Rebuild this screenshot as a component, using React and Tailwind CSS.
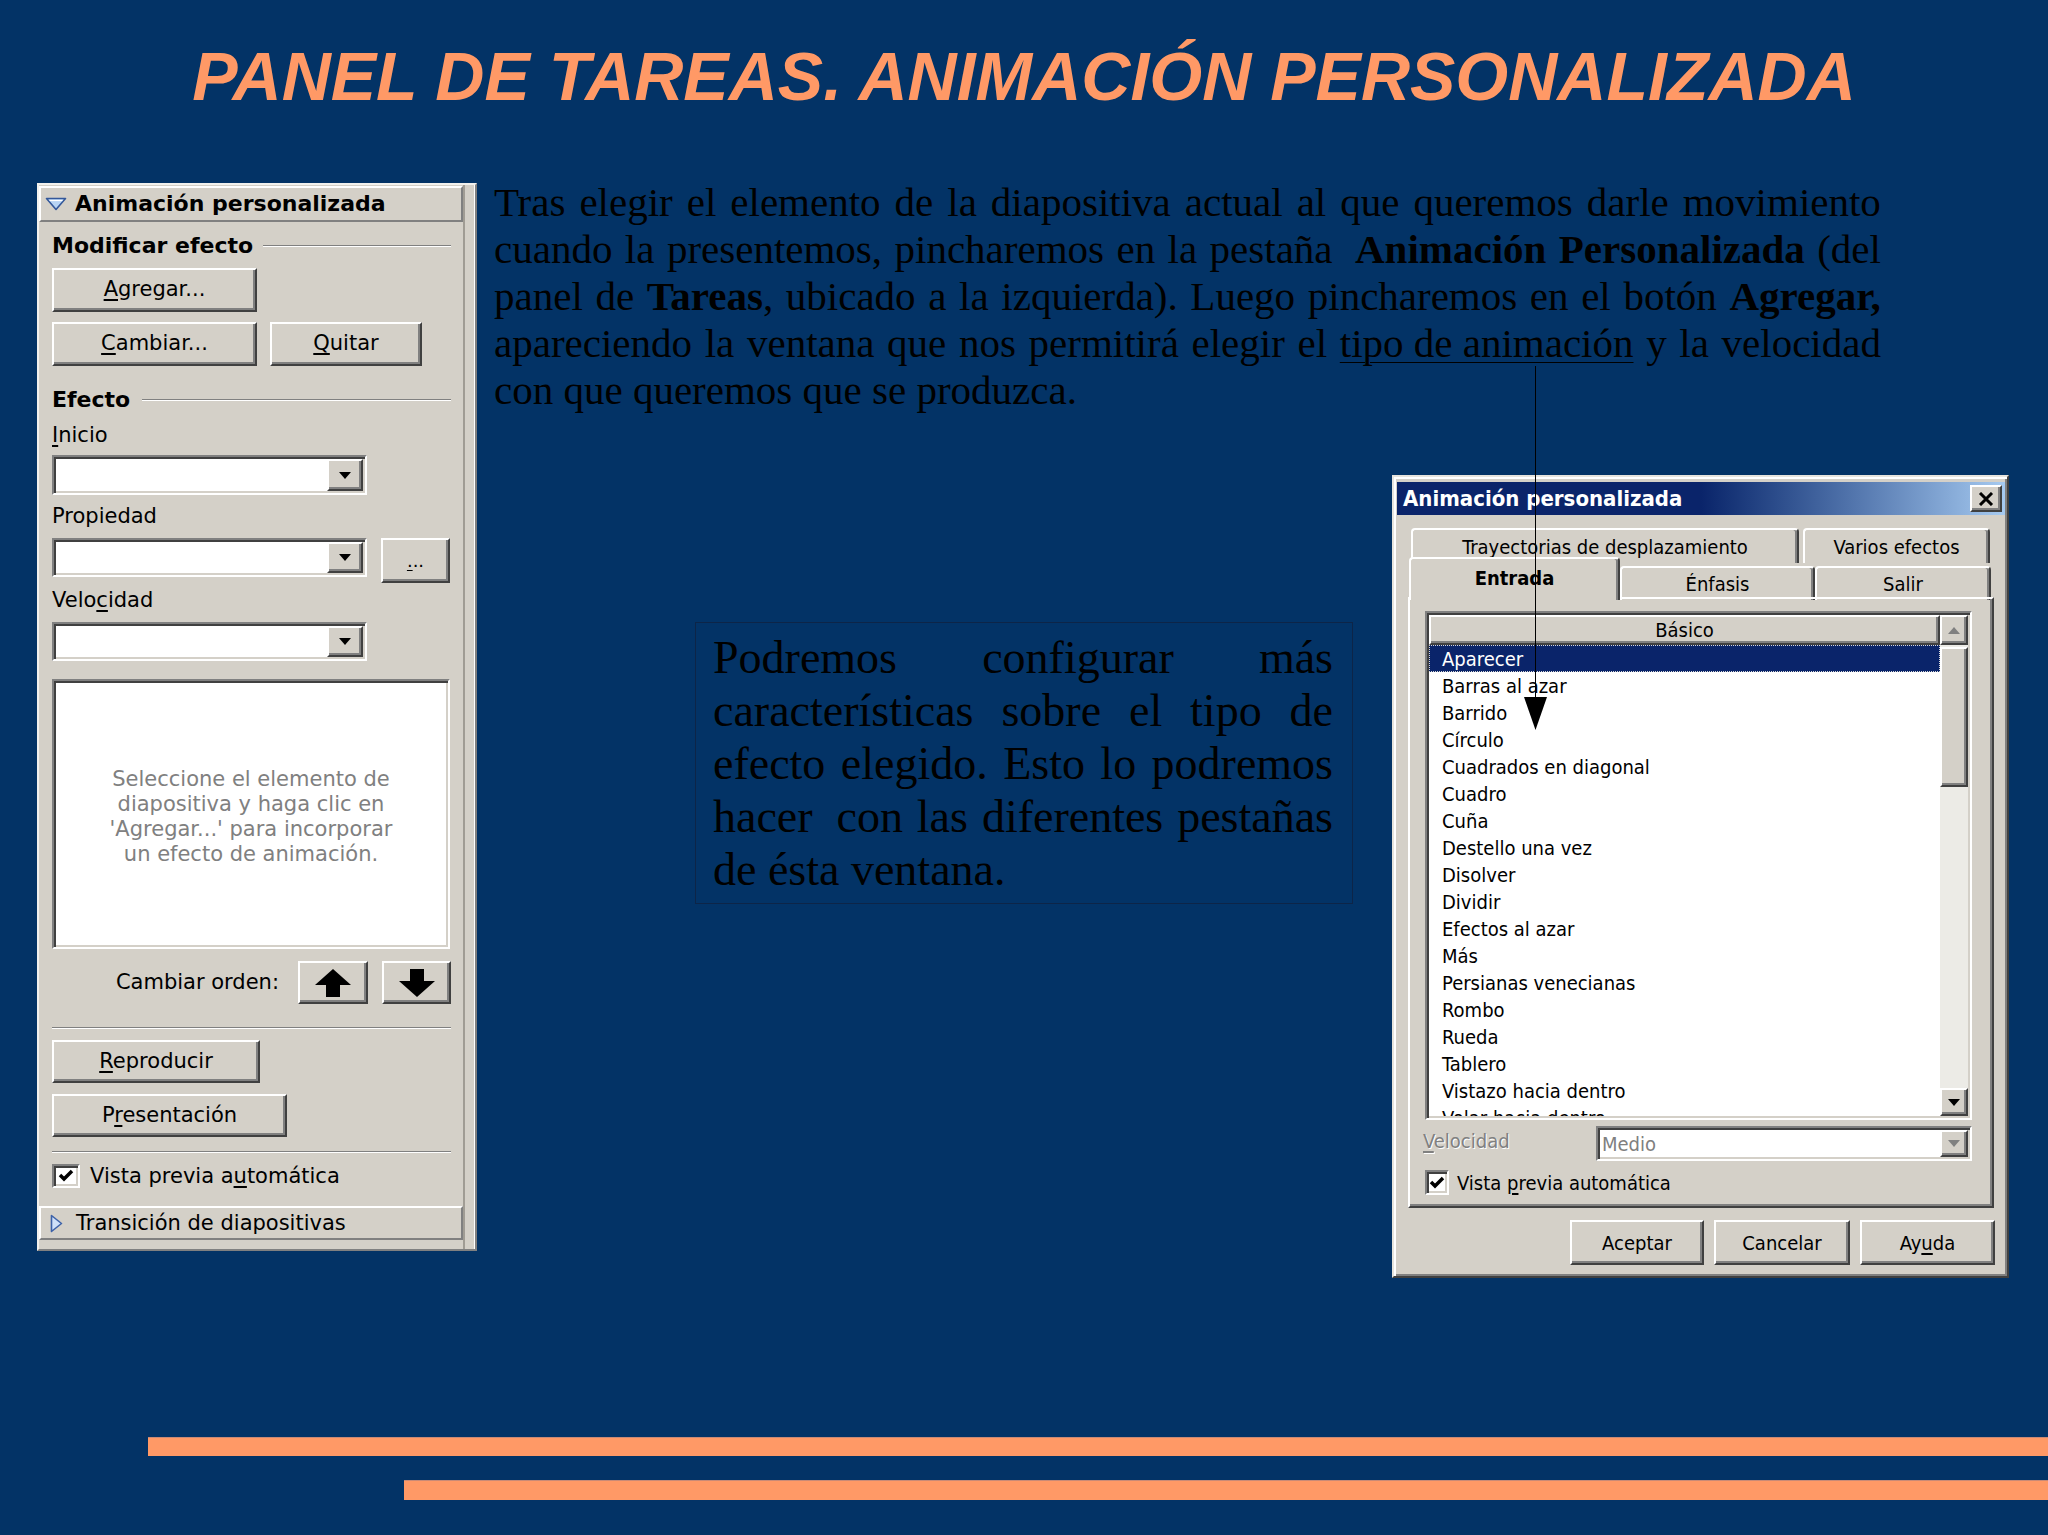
import React from "react";

const RAISED =
  "bg-[#d4d0c8] border-2 border-t-white border-l-white border-r-[#404040] border-b-[#404040] shadow-[inset_-2px_-2px_0_#808080]";
const SUNKEN =
  "bg-white border-2 border-t-[#808080] border-l-[#808080] border-r-white border-b-white shadow-[inset_2px_2px_0_#404040,inset_-2px_-2px_0_#d4d0c8]";

function Btn({ className = "", children }) {
  return (
    <div className={`${RAISED} flex items-center justify-center ${className}`}>
      {children}
    </div>
  );
}

function DropArrow({ color = "black" }) {
  return (
    <svg width="12" height="7" viewBox="0 0 12 7">
      <path d="M0 0 H12 L6 7 Z" fill={color} />
    </svg>
  );
}

function Combo({ className = "", children }) {
  return (
    <div className={`${SUNKEN} flex items-stretch p-[2px] ${className}`}>
      <div className="flex-1 flex items-center">{children}</div>
      <div className={`${RAISED} w-[36px] flex items-center justify-center`}>
        <DropArrow />
      </div>
    </div>
  );
}

function Check({ size = "w-[28px] h-[24px]" }) {
  return (
    <div className={`${SUNKEN} ${size} flex items-center justify-center`}>
      <svg width="16" height="14" viewBox="0 0 16 14">
        <path d="M2 6 L6 10 L14 2" stroke="black" strokeWidth="3.5" fill="none" />
      </svg>
    </div>
  );
}

function Etched({ className = "" }) {
  return <div className={`h-[2px] border-t border-t-[#808080] border-b border-b-white ${className}`} />;
}

function JLine({ words, className = "" }) {
  return (
    <div className={`flex justify-between ${className}`}>
      {words.map((w, i) => (
        <span key={i}>{w}</span>
      ))}
    </div>
  );
}

function Panel() {
  return (
    <div className="mt-[4px] ml-[37px] w-[440px] h-[1068px] bg-[#d4d0c8] border-2 border-t-[#f2f1ed] border-l-[#f2f1ed] border-r-[#808080] border-b-[#808080] flex font-['DejaVu_Sans',sans-serif] text-[21px] text-black">
      <div className="w-[424px] flex flex-col">
        <div className="mt-[1px] h-[36px] border-2 border-t-white border-l-white border-r-[#808080] border-b-[#808080] flex items-center">
          <svg className="ml-[4px]" width="22" height="14" viewBox="0 0 22 14">
            <path d="M1.5 1.5 L20.5 1.5 L11 12.5 Z" fill="#b8d4f4" stroke="#34589a" strokeWidth="1.6" strokeLinejoin="round" />
            <path d="M4.5 3.5 L17.5 3.5" stroke="#ffffff" strokeWidth="1.2" />
          </svg>
          <span className="ml-[8px] font-bold text-[22px] leading-[24px]">Animación personalizada</span>
        </div>

        <div className="pl-[13px] pr-[12px] flex flex-col">
          <div className="mt-[12px] h-[24px] flex items-center">
            <span className="font-bold text-[22px] leading-[24px] whitespace-nowrap">Modificar efecto</span>
            <Etched className="flex-1 ml-[10px]" />
          </div>
          <Btn className="mt-[10px] w-[205px] h-[44px]">
            <span>
              <u className="underline-offset-[3px]">A</u>gregar...
            </span>
          </Btn>
          <div className="mt-[10px] flex">
            <Btn className="w-[205px] h-[44px]">
              <span>
                <u className="underline-offset-[3px]">C</u>ambiar...
              </span>
            </Btn>
            <Btn className="ml-[13px] w-[152px] h-[44px]">
              <span>
                <u className="underline-offset-[3px]">Q</u>uitar
              </span>
            </Btn>
          </div>
          <div className="mt-[22px] h-[24px] flex items-center">
            <span className="font-bold text-[22px] leading-[24px]">Efecto</span>
            <Etched className="flex-1 ml-[12px]" />
          </div>
          <div className="mt-[11px] h-[24px] leading-[24px]">
            <u className="underline-offset-[3px]">I</u>nicio
          </div>
          <Combo className="mt-[8px] w-[315px] h-[40px]" />
          <div className="mt-[9px] h-[24px] leading-[24px]">Propiedad</div>
          <div className="mt-[10px] flex items-start">
            <Combo className="w-[315px] h-[39px]" />
            <Btn className="ml-[14px] w-[69px] h-[45px]">
              <span className="text-[18px]">
                <u className="underline-offset-[3px]">.</u>..
              </span>
            </Btn>
          </div>
          <div className="mt-[5px] h-[24px] leading-[24px]">
            Velo<u className="underline-offset-[3px]">c</u>idad
          </div>
          <Combo className="mt-[10px] w-[315px] h-[39px]" />
          <div className={`${SUNKEN} mt-[18px] w-[398px] h-[270px] flex items-center justify-center pt-[5px]`}>
            <div className="text-center text-[#808080] leading-[25px]">
              Seleccione el elemento de
              <br />
              diapositiva y haga clic en
              <br />
              'Agregar...' para incorporar
              <br />
              un efecto de animación.
            </div>
          </div>
          <div className="mt-[12px] h-[43px] flex items-center justify-end">
            <span className="mr-[19px]">Cambiar orden:</span>
            <Btn className="w-[70px] h-[43px]">
              <svg width="36" height="28" viewBox="0 0 36 28">
                <path d="M18 0 L36 16 L25 16 L25 28 L11 28 L11 16 L0 16 Z" fill="black" />
              </svg>
            </Btn>
            <Btn className="ml-[14px] w-[69px] h-[43px]">
              <svg width="36" height="28" viewBox="0 0 36 28">
                <path d="M18 28 L36 12 L25 12 L25 0 L11 0 L11 12 L0 12 Z" fill="black" />
              </svg>
            </Btn>
          </div>
          <Etched className="mt-[23px]" />
          <Btn className="mt-[11px] w-[208px] h-[43px]">
            <span>
              <u className="underline-offset-[3px]">R</u>eproducir
            </span>
          </Btn>
          <Btn className="mt-[11px] w-[235px] h-[43px]">
            <span>
              P<u className="underline-offset-[3px]">r</u>esentación
            </span>
          </Btn>
          <Etched className="mt-[14px]" />
          <div className="mt-[11px] h-[24px] flex items-center">
            <Check />
            <span className="ml-[10px] leading-[24px]">
              Vista previa a<u className="underline-offset-[3px]">u</u>tomática
            </span>
          </div>
        </div>

        <div className="mt-[18px] h-[34px] border-2 border-t-white border-l-white border-r-[#808080] border-b-[#808080] flex items-center">
          <svg className="ml-[9px]" width="13" height="19" viewBox="0 0 13 19">
            <path d="M1.5 1.5 L11.5 9.5 L1.5 17.5 Z" fill="#cfe0f8" stroke="#3d62a8" strokeWidth="1.6" strokeLinejoin="round" />
          </svg>
          <span className="ml-[13px] leading-[24px]">Transición de diapositivas</span>
        </div>
      </div>
      <div className="w-[12px] border-l-2 border-l-[#a09c94] border-r border-r-white" />
    </div>
  );
}

const ITEMS = [
  "Barras al azar",
  "Barrido",
  "Círculo",
  "Cuadrados en diagonal",
  "Cuadro",
  "Cuña",
  "Destello una vez",
  "Disolver",
  "Dividir",
  "Efectos al azar",
  "Más",
  "Persianas venecianas",
  "Rombo",
  "Rueda",
  "Tablero",
  "Vistazo hacia dentro",
  "Volar hacia dentro",
];

const TAB =
  "bg-[#d4d0c8] border-t-2 border-l-2 border-r-2 border-t-white border-l-white border-r-[#404040] rounded-t-[4px] shadow-[inset_-2px_0_0_#808080] flex items-center justify-center";

function Dialog() {
  return (
    <div className="ml-[39px] w-[617px] h-[803px] bg-[#d4d0c8] border-2 border-t-[#e6e4de] border-l-[#e6e4de] border-r-[#404040] border-b-[#404040] shadow-[inset_2px_2px_0_#ffffff,inset_-2px_-2px_0_#808080] flex flex-col font-['DejaVu_Sans_Condensed','DejaVu_Sans',sans-serif] font-stretch-condensed text-[20px] text-black">
      <div className="mt-[5px] ml-[3px] mr-[2px] h-[33px] bg-linear-to-r from-[#0a246a] via-[#0a246a] to-[#a6caf0] flex items-center">
        <span className="ml-[6px] text-white font-bold text-[22px] leading-[24px]">Animación personalizada</span>
        <div className={`${RAISED} ml-auto mr-[3px] w-[32px] h-[27px] flex items-center justify-center`}>
          <svg width="16" height="14" viewBox="0 0 16 14">
            <path d="M2 1 L14 13 M14 1 L2 13" stroke="black" strokeWidth="3" />
          </svg>
        </div>
      </div>

      <div className="mt-[13px] h-[35px] flex">
        <div className={`${TAB} ml-[17px] w-[388px] h-[35px]`}>Trayectorias de desplazamiento</div>
        <div className={`${TAB} ml-[4px] w-[187px] h-[35px]`}>Varios efectos</div>
      </div>
      <div className="-mt-[6px] h-[43px] flex items-end">
        <div className={`${TAB} relative z-10 ml-[15px] w-[211px] h-[43px] pb-[4px]`}>
          <span className="font-bold">Entrada</span>
        </div>
        <div className={`${TAB} w-[195px] h-[34px]`}>Énfasis</div>
        <div className={`${TAB} w-[176px] h-[34px]`}>Salir</div>
      </div>

      <div className="-mt-[3px] ml-[14px] w-[586px] h-[611px] border-2 border-t-white border-l-white border-r-[#404040] border-b-[#404040] shadow-[inset_-2px_-2px_0_#808080] flex flex-col">
        <div className={`${SUNKEN} mt-[12px] ml-[15px] w-[547px] h-[509px] flex p-[2px]`}>
          <div className="flex-1 flex flex-col overflow-hidden">
            <div className={`${RAISED} shrink-0 h-[30px] flex items-center justify-center`}>Básico</div>
            <div className="shrink-0 h-[27px] bg-[#0a246a] text-white border border-dotted border-[#d8d8d8] flex items-center pl-[12px]">
              Aparecer
            </div>
            {ITEMS.map((t) => (
              <div key={t} className="shrink-0 h-[27px] flex items-center pl-[13px]">
                {t}
              </div>
            ))}
          </div>
          <div className="w-[28px] flex flex-col bg-[#ecebe6]">
            <div className={`${RAISED} h-[30px] flex items-center justify-center`}>
              <svg width="12" height="7" viewBox="0 0 12 7">
                <path d="M6 0 L12 7 H0 Z" fill="#808080" />
              </svg>
            </div>
            <div className={`${RAISED} mt-[2px] h-[140px]`} />
            <div className="flex-1" />
            <div className={`${RAISED} h-[28px] flex items-center justify-center`}>
              <DropArrow />
            </div>
          </div>
        </div>
        <div className="mt-[6px] ml-[13px] h-[35px] flex items-center">
          <span className="mb-[6px] text-[#808080] [text-shadow:1px_1px_0_#ffffff]">
            <u className="underline-offset-[3px]">V</u>elocidad
          </span>
          <div className={`${SUNKEN} ml-auto mr-[20px] w-[376px] h-[35px] flex items-stretch p-[2px]`}>
            <div className="flex-1 flex items-center pl-[2px] text-[#808080]">Medio</div>
            <div className={`${RAISED} w-[28px] flex items-center justify-center`}>
              <DropArrow color="#808080" />
            </div>
          </div>
        </div>
        <div className="mt-[9px] ml-[15px] h-[25px] flex items-center">
          <Check size="w-[24px] h-[25px]" />
          <span className="ml-[8px]">
            Vista <u className="underline-offset-[3px]">p</u>revia automática
          </span>
        </div>
      </div>

      <div className="mt-[12px] pr-[12px] flex justify-end">
        <Btn className="w-[134px] h-[45px]">Aceptar</Btn>
        <Btn className="ml-[10px] w-[136px] h-[45px]">Cancelar</Btn>
        <Btn className="ml-[10px] w-[135px] h-[45px]">
          <span>
            Ay<u className="underline-offset-[3px]">u</u>da
          </span>
        </Btn>
      </div>
    </div>
  );
}

export default function App() {
  return (
    <div className="w-[2048px] h-[1535px] bg-[#033366] relative overflow-hidden flex flex-col">
      <h1 className="mt-[38px] text-center font-['Liberation_Sans',Arial,sans-serif] font-bold italic text-[68px] leading-[76px] text-[#ff9966]">
        PANEL DE TAREAS. ANIMACIÓN PERSONALIZADA
      </h1>

      <div className="mt-[65px] flex items-start">
        <Panel />
        <div className="ml-[17px] flex flex-col">
          <div className="w-[1387px] font-['Liberation_Serif','Times_New_Roman',serif] text-[41px] leading-[47px] text-black">
            <JLine
              className="h-[47px]"
              words={["Tras", "elegir", "el", "elemento", "de", "la", "diapositiva", "actual", "al", "que", "queremos", "darle", "movimiento"]}
            />
            <JLine
              className="h-[47px]"
              words={[
                "cuando",
                "la",
                "presentemos,",
                "pincharemos",
                "en",
                "la",
                <span className="mr-[10px]">pestaña</span>,
                <b>Animación</b>,
                <b>Personalizada</b>,
                "(del",
              ]}
            />
            <JLine
              className="h-[47px]"
              words={[
                "panel",
                "de",
                <>
                  <b>Tareas</b>,
                </>,
                "ubicado",
                "a",
                "la",
                "izquierda).",
                "Luego",
                "pincharemos",
                "en",
                "el",
                "botón",
                <b>Agregar,</b>,
              ]}
            />
            <JLine
              className="h-[47px]"
              words={[
                "apareciendo",
                "la",
                "ventana",
                "que",
                "nos",
                "permitirá",
                "elegir",
                "el",
                <span className="underline decoration-1 underline-offset-[5px]">tipo de animación</span>,
                "y",
                "la",
                "velocidad",
              ]}
            />
            <div className="h-[47px]">con que queremos que se produzca.</div>
          </div>

          <div className="mt-[61px] flex items-start">
            <div className="ml-[201px] mt-[147px] w-[658px] h-[282px] border border-[#0d2548] pl-[17px] pr-[19px] pt-[8px] font-['Liberation_Serif','Times_New_Roman',serif] text-[46px] leading-[53px] text-black">
              <JLine className="h-[53px]" words={["Podremos", "configurar", "más"]} />
              <JLine className="h-[53px]" words={["características", "sobre", "el", "tipo", "de"]} />
              <JLine className="h-[53px]" words={["efecto", "elegido.", "Esto", "lo", "podremos"]} />
              <JLine className="h-[53px]" words={[<span className="mr-[10px]">hacer</span>, "con", "las", "diferentes", "pestañas"]} />
              <div className="h-[53px]">de ésta ventana.</div>
            </div>
            <Dialog />
          </div>
        </div>
      </div>

      <div className="mt-auto pb-[35px] flex flex-col">
        <div className="ml-[148px] h-[19px] bg-[#ff9966] border-t border-t-[#c98a76]" />
        <div className="ml-[404px] mt-[24px] h-[20px] bg-[#ff9966] border-t border-t-[#c98a76]" />
      </div>

      <div className="absolute left-[1535px] top-[366px] w-[1px] h-[335px] bg-black z-20" />
      <svg className="absolute left-[1524px] top-[697px] z-20" width="23" height="33" viewBox="0 0 23 33">
        <path d="M0 0 H23 L11.5 33 Z" fill="black" />
      </svg>
    </div>
  );
}
